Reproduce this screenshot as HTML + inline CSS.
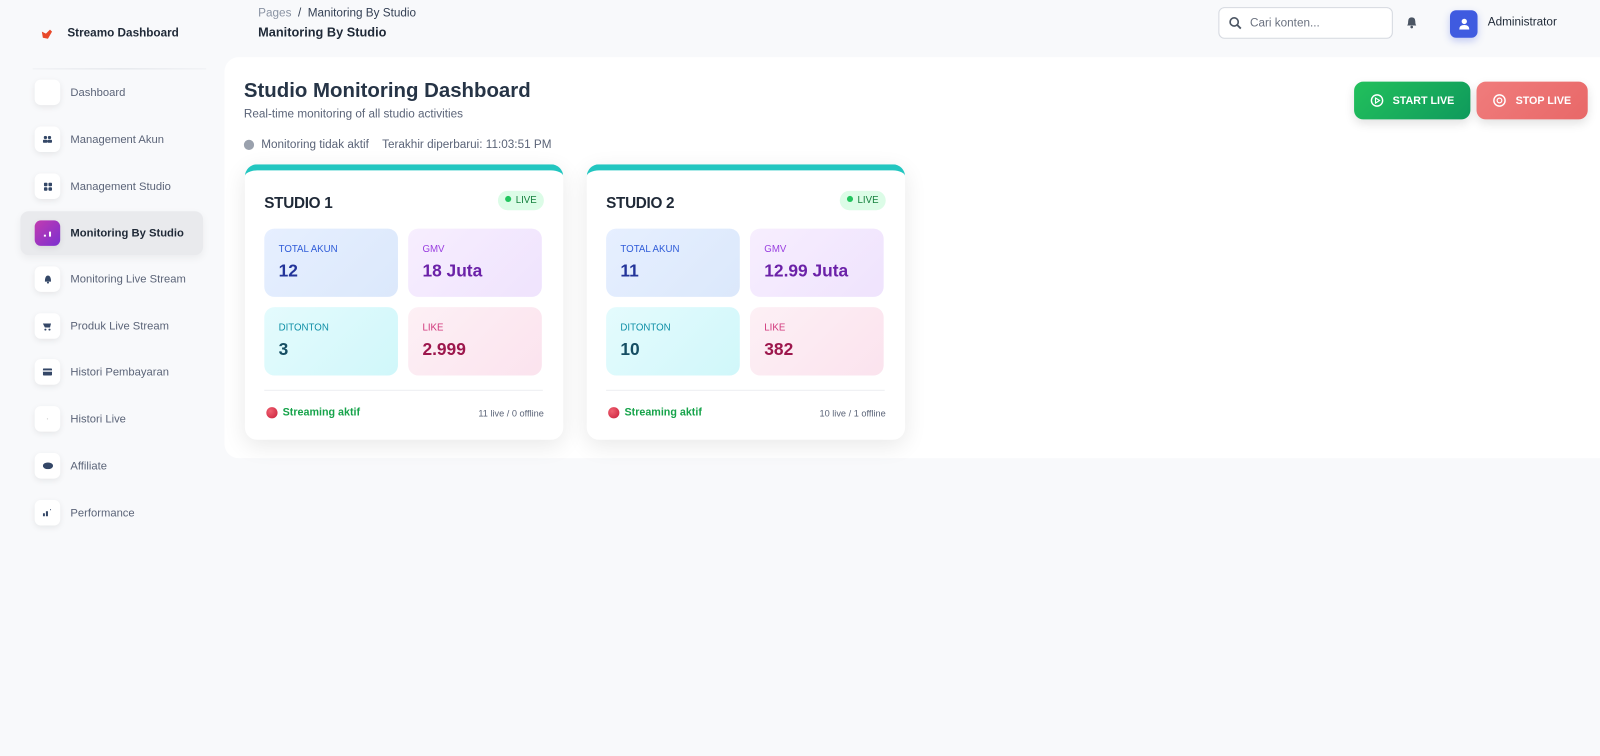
<!DOCTYPE html>
<html><head><meta charset="utf-8"><style>
*{box-sizing:border-box;margin:0;padding:0}
body{width:1600px;height:756px;background:#f8f9fb;font-family:"Liberation Sans",sans-serif;color:#344054;position:relative;overflow:hidden}
#w{position:absolute;left:0;top:0;width:1568px;height:741px;transform:scale(1.0204);transform-origin:0 0}
.abs{position:absolute}
.logo{left:40px;top:27px;font-size:11.5px;font-weight:bold;color:#1f2937;display:flex;align-items:center;gap:14px}
.hr{left:32px;top:67px;width:170px;height:1px;background:linear-gradient(90deg,#eef0f3,#dde1e6,#eef0f3)}
.nav{left:20px;width:179px;height:43px;border-radius:8px;display:flex;align-items:center;padding-left:14px;font-size:11px;color:#5b6478}
.nav .ic{width:25px;height:25px;border-radius:6px;background:#fff;box-shadow:0 2px 6px rgba(0,0,0,.08);margin-right:10px;display:flex;align-items:center;justify-content:center}
.nav.act{background:#e9eaed;color:#1f2937;font-weight:bold;box-shadow:0 3px 8px rgba(0,0,0,.05)}
.nav.act .ic{background:linear-gradient(135deg,#c23cb0,#7b2fd0)}
.panel{left:220px;top:56px;width:1380px;height:393px;background:#fff;border-radius:14px 0 0 14px}
.card{top:161px;width:312px;height:270px;background:#fff;border-radius:12px;box-shadow:0 6px 22px rgba(0,0,0,.09);overflow:hidden;border-top:6px solid #22c6c0}
.card h3{position:absolute;left:19px;top:24px;font-size:15px;letter-spacing:-.3px;color:#1f2937}
.live{position:absolute;right:19px;top:20px;background:#dcfce7;color:#15803d;font-size:9.5px;padding:4px 7px 4px 7px;border-radius:10px}
.live:before{content:"";display:inline-block;width:6px;height:6px;border-radius:50%;background:#22c55e;margin-right:4px;vertical-align:1px}
.st{position:absolute;width:131px;height:67px;border-radius:10px;padding:15px 14px}
.st .l{font-size:9.5px}
.st .v{font-size:17px;font-weight:bold;margin-top:6px}
.s1{left:19px;top:57px;background:linear-gradient(135deg,#e6efff,#dbe8fb);color:#2e5bd8}.s1 .v{color:#23349a}
.s2{left:160px;top:57px;background:linear-gradient(135deg,#f7eefe,#efe3fd);color:#9a3fe0}.s2 .v{color:#6b21a8}
.s3{left:19px;top:134px;background:linear-gradient(135deg,#e4fbfd,#d0f7fa);color:#0e8fa6}.s3 .v{color:#164e63}
.s4{left:160px;top:134px;background:linear-gradient(135deg,#fdf0f5,#fbe3ee);color:#d0357a}.s4 .v{color:#9d174d}
.div{position:absolute;left:19px;top:215px;width:273px;height:1px;background:#eceef1}
.foot{position:absolute;left:21px;top:231px;font-size:10.5px;font-weight:bold;color:#16a34a;display:flex;align-items:center;gap:5px}
.foot i{width:11px;height:11px;border-radius:50%;background:radial-gradient(circle at 35% 35%,#f06070,#c81e3a)}
.cnt{position:absolute;right:19px;top:233px;font-size:9px;color:#5b6478}
.btn{top:80px;height:37px;border-radius:9px;color:#fff;font-size:10.5px;font-weight:bold;display:flex;align-items:center;justify-content:center;gap:9px;box-shadow:0 4px 10px rgba(0,0,0,.12)}
</style></head><body><div id="w">
<div class="abs logo"><svg width="12" height="11" viewBox="0 0 12 11"><path d="M1 3 L5 5 L9 1 L11 3 L7 10 L2 9 Z" fill="#e8492a"/></svg>Streamo Dashboard</div>
<div class="abs hr"></div>
<div class="abs nav" style="top:69px"><span class="ic"></span>Dashboard</div>
<div class="abs nav" style="top:115px"><span class="ic"><svg width="9" height="7"><circle cx="2.5" cy="1.8" r="1.6" fill="#344767"/><circle cx="6.5" cy="1.8" r="1.6" fill="#344767"/><rect x="0" y="4" width="4.5" height="3" rx="1" fill="#344767"/><rect x="4.5" y="4" width="4.5" height="3" rx="1" fill="#344767"/></svg></span>Management Akun</div>
<div class="abs nav" style="top:161px"><span class="ic"><svg width="8" height="8"><rect width="3.5" height="3.5" rx="1" fill="#344767"/><rect x="4.5" width="3.5" height="3.5" rx="1" fill="#344767"/><rect y="4.5" width="3.5" height="3.5" rx="1" fill="#344767"/><rect x="4.5" y="4.5" width="3.5" height="3.5" rx="1" fill="#344767"/></svg></span>Management Studio</div>
<div class="abs nav act" style="top:207px"><span class="ic"><svg width="10" height="6"><rect x="1" y="4" width="2" height="2" fill="#fff"/><rect x="6" y="1" width="2" height="5" fill="#fff"/></svg></span>Monitoring By Studio</div>
<div class="abs nav" style="top:252px"><span class="ic"><svg width="8" height="9"><path d="M1 7 Q1 1 4 1 Q7 1 7 7 Z" fill="#344767"/><circle cx="4" cy="8" r="1" fill="#344767"/></svg></span>Monitoring Live Stream</div>
<div class="abs nav" style="top:298px"><span class="ic"><svg width="9" height="8"><path d="M0 1 H8 L7 5 H2 Z" fill="#344767"/><circle cx="2.5" cy="7" r="1" fill="#344767"/><circle cx="6.5" cy="7" r="1" fill="#344767"/></svg></span>Produk Live Stream</div>
<div class="abs nav" style="top:343px"><span class="ic"><svg width="9" height="7"><rect width="9" height="7" rx="1" fill="#344767"/><rect y="2" width="9" height="1.3" fill="#fff"/></svg></span>Histori Pembayaran</div>
<div class="abs nav" style="top:389px"><span class="ic"><svg width="3" height="3"><circle cx="1.5" cy="1.5" r=".6" fill="#ccc"/></svg></span>Histori Live</div>
<div class="abs nav" style="top:435px"><span class="ic"><svg width="10" height="7"><ellipse cx="5" cy="3.5" rx="5" ry="3.3" fill="#344767"/></svg></span>Affiliate</div>
<div class="abs nav" style="top:481px"><span class="ic"><svg width="9" height="7"><rect x="0" y="4" width="2" height="3" fill="#344767"/><rect x="3" y="2" width="2" height="5" fill="#344767"/><rect x="7" y="0" width="1" height="1" fill="#344767"/></svg></span>Performance</div>

<div class="abs" style="left:253px;top:7px;font-size:11.5px;color:#344054"><span style="color:#8a93a3">Pages</span>&nbsp; / &nbsp;Manitoring By Studio</div>
<div class="abs" style="left:253px;top:25px;font-size:12.5px;font-weight:bold;color:#1f2937">Manitoring By Studio</div>

<div class="abs" style="left:1194px;top:7px;width:171px;height:31px;border:1px solid #d5d9e0;border-radius:6px;background:#fff;display:flex;align-items:center;padding-left:9px;font-size:11.5px;color:#6b7280;gap:8px"><svg width="13" height="13" viewBox="0 0 13 13"><circle cx="5.5" cy="5.5" r="4" fill="none" stroke="#4b5563" stroke-width="1.6"/><path d="M8.5 8.5 L12 12" stroke="#4b5563" stroke-width="1.8"/></svg>Cari konten...</div>
<svg class="abs" style="left:1378px;top:16px" width="11" height="12" viewBox="0 0 11 12"><path d="M1 9 Q2 8 2 5 Q2 1 5.5 1 Q9 1 9 5 Q9 8 10 9 Z" fill="#4b5563"/><circle cx="5.5" cy="10.5" r="1.3" fill="#4b5563"/></svg>
<div class="abs" style="left:1421px;top:10px;width:27px;height:27px;border-radius:6px;background:#3f5be0;box-shadow:0 3px 8px rgba(63,91,224,.3);display:flex;align-items:center;justify-content:center"><svg width="10" height="11"><circle cx="5" cy="3" r="2.6" fill="#fff"/><path d="M0 11 Q0 6.5 5 6.5 Q10 6.5 10 11 Z" fill="#fff"/></svg></div>
<div class="abs" style="left:1458px;top:16px;font-size:11.5px;color:#1f2937">Administrator</div>

<div class="abs panel"></div>
<div class="abs" style="left:239px;top:78px;font-size:20px;font-weight:bold;color:#263446">Studio Monitoring Dashboard</div>
<div class="abs" style="left:239px;top:106px;font-size:11.5px;color:#5b6478">Real-time monitoring of all studio activities</div>
<div class="abs" style="left:239px;top:136px;font-size:11.5px;color:#5b6478;display:flex;align-items:center"><span style="width:10px;height:10px;border-radius:50%;background:#9aa1ad;margin-right:7px"></span>Monitoring tidak aktif<span style="margin-left:13px">Terakhir diperbarui: 11:03:51 PM</span></div>

<div class="abs btn" style="left:1327px;width:114px;background:linear-gradient(135deg,#22c05c,#0f9a5c)"><svg width="13" height="13"><circle cx="6.5" cy="6.5" r="5.5" fill="none" stroke="#fff" stroke-width="1.4"/><path d="M5 4 L9 6.5 L5 9 Z" fill="none" stroke="#fff" stroke-width="1.1"/></svg>START LIVE</div>
<div class="abs btn" style="left:1447px;width:109px;background:linear-gradient(135deg,#f07c7c,#e86868)"><svg width="13" height="13"><circle cx="6.5" cy="6.5" r="5.5" fill="none" stroke="#fff" stroke-width="1.4"/><circle cx="6.5" cy="6.5" r="2.3" fill="none" stroke="#fff" stroke-width="1.2"/></svg>STOP LIVE</div>

<div class="abs card" style="left:240px"><h3>STUDIO 1</h3><span class="live">LIVE</span>
<div class="st s1"><div class="l">TOTAL AKUN</div><div class="v">12</div></div>
<div class="st s2"><div class="l">GMV</div><div class="v">18 Juta</div></div>
<div class="st s3"><div class="l">DITONTON</div><div class="v">3</div></div>
<div class="st s4"><div class="l">LIKE</div><div class="v">2.999</div></div>
<div class="div"></div><div class="foot"><i></i>Streaming aktif</div><div class="cnt">11 live / 0 offline</div></div>

<div class="abs card" style="left:575px"><h3>STUDIO 2</h3><span class="live">LIVE</span>
<div class="st s1"><div class="l">TOTAL AKUN</div><div class="v">11</div></div>
<div class="st s2"><div class="l">GMV</div><div class="v">12.99 Juta</div></div>
<div class="st s3"><div class="l">DITONTON</div><div class="v">10</div></div>
<div class="st s4"><div class="l">LIKE</div><div class="v">382</div></div>
<div class="div"></div><div class="foot"><i></i>Streaming aktif</div><div class="cnt">10 live / 1 offline</div></div>
</div></body></html>
